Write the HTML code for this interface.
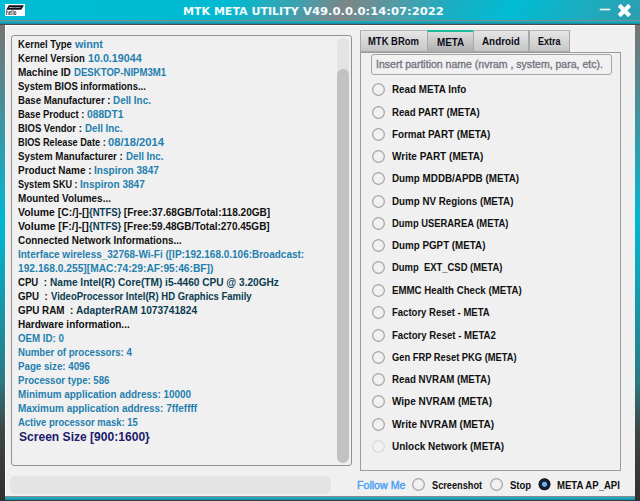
<!DOCTYPE html>
<html><head><meta charset="utf-8"><title>MTK META UTILITY</title>
<style>
html,body{margin:0;padding:0;}
body{width:640px;height:501px;overflow:hidden;position:relative;font-family:"Liberation Sans",sans-serif;
 background:linear-gradient(to bottom,#757575 30px,#00b8d4 222px,#2a7a85 380px,#3e4444 432px,#303030 501px);}
.abs{position:absolute;}
#title{left:0;top:0;width:640px;height:20px;overflow:hidden;background:#00bcd4;}
#title i{position:absolute;display:block;left:0;top:0;width:680px;height:20px;transform-origin:0 0;transform:skewX(-33deg);background:linear-gradient(to right,#00bcd4 0,#00bad2 230px,#3aa3b1 296px,#7d8587 350px,#4a9faa 406px,#1aaec2 456px,#00bcd4 517px,#1cacbf 590px,#2c9fb0 650px);}
#tl1{left:0;top:20px;width:640px;height:1px;background:#7c8c8e;}
#tl2{left:0;top:21px;width:640px;height:3px;background:linear-gradient(to bottom,#1fb3cb,#16889a);}
#tl3{left:0;top:24px;width:640px;height:1px;background:#4a4a4a;}
#panel{left:5px;top:25px;width:630px;height:471px;background:#f0f0f0;box-shadow:inset 1px 1px 0 #fff;}
#bl1{left:5px;top:496px;width:630px;height:1px;background:#8a8a8a;}
#bl2{left:5px;top:497px;width:630px;height:3px;background:linear-gradient(to bottom,#22b4cc,#178c9e);}
#bl3{left:5px;top:500px;width:630px;height:1px;background:#3a3a3a;}
.tx{top:1px;color:#f4fbfc;font-family:"DejaVu Sans","Liberation Sans",sans-serif;font-weight:bold;font-size:11px;line-height:21px;white-space:pre;transform-origin:0 50%;}
#logo{left:5px;top:4px;}
#grp{left:11px;top:35px;width:341px;height:431px;border:1px solid #929292;border-radius:3px;box-sizing:border-box;}
#track{left:337px;top:38px;width:12px;height:425px;border-radius:6px;background:#e3e3e3;}
#thumb{left:337px;top:69px;width:12px;height:394px;border-radius:6px;background:#c2c2c2;}
.ln{position:absolute;left:18px;white-space:pre;font-weight:bold;font-size:10px;line-height:14px;height:14px;color:#101010;transform-origin:0 50%;}
.b{color:#1f7fae;}
.t{color:#0b3c50;}
#scr{left:19px;top:429px;font-weight:bold;font-size:12px;line-height:16px;color:#1c1c6c;white-space:pre;transform-origin:0 50%;}
#prog{left:10px;top:476px;width:321px;height:18px;border-radius:5px;background:#e4e4e4;}
.tab{position:absolute;top:30px;height:22px;box-sizing:border-box;border:1px solid #a8a8a8;border-top-color:#b4b4b4;background:linear-gradient(to bottom,#e6e6e6,#c6c6c6);}
.tab.sel{border-top:2px solid #1abc9c;background:linear-gradient(to bottom,#dcdcdc,#b0b0b0);}
.tt{position:absolute;white-space:pre;font-weight:bold;font-size:10px;line-height:14px;height:14px;color:#0c0c18;transform-origin:0 50%;}
#pane{left:360px;top:52px;width:261px;height:419px;box-sizing:border-box;border:1px solid #9c9c9c;background:#f0f0f0;}
#inp{left:371px;top:54px;width:241px;height:21px;box-sizing:border-box;border:1px solid #a6a6a6;border-radius:3px;background:#f1f1f1;}
#ph{left:376px;top:58px;font-size:10px;line-height:14px;color:#777783;-webkit-text-stroke:0.35px #777783;white-space:pre;transform-origin:0 50%;}
.rd{position:absolute;width:14px;height:14px;background:radial-gradient(circle at 6.5px 6.5px,#f1f1f1 0,#f1f1f1 4.7px,#acacac 5.5px,#acacac 6.0px,rgba(172,172,172,0) 6.8px);}
.rd.dis{background:radial-gradient(circle at 6.5px 6.5px,#f1f1f1 0,#f1f1f1 4.7px,#dadada 5.5px,#dadada 6.0px,rgba(218,218,218,0) 6.8px);}
.rl{position:absolute;white-space:pre;font-weight:bold;font-size:10px;line-height:14px;height:14px;color:#101010;transform-origin:0 50%;}
#fm{left:357px;top:479px;font-size:10px;line-height:14px;color:#4b9ff5;-webkit-text-stroke:0.4px #4b9ff5;white-space:pre;transform-origin:0 50%;}
#rc{left:538px;top:478px;width:14px;height:14px;background:radial-gradient(circle at 6.5px 6.3px,#6db3f5 0,#6db3f5 2.1px,#151f33 3.0px,#151f33 5.7px,rgba(21,31,51,0) 6.4px);}
</style></head><body>
<div class="abs" id="title"><i></i></div><div class="abs" id="tl1"></div><div class="abs" id="tl2"></div><div class="abs" id="tl3"></div>
<div class="abs" id="panel"></div><div class="abs" id="bl1"></div><div class="abs" id="bl2"></div><div class="abs" id="bl3"></div>
<div class="abs tx" id="ttext" style="left:183px;transform:scaleX(1.0026)">MTK META UTILITY </div><div class="abs tx" id="ttext2" style="left:302.5px;transform:scaleX(1.0535)">V49.0.0.0:14:07:2022</div>
<svg class="abs" id="logo" width="20" height="12" viewBox="0 0 20 12" style="will-change:transform"><rect width="20" height="12" fill="#fff"/><polygon points="3.8,1.3 18.9,1.3 16.3,5.7 1.2,5.7" fill="#0b0f1a"/><text x="4.1" y="4.25" font-family="Liberation Sans, sans-serif" font-weight="bold" font-size="2.1" textLength="11.6" lengthAdjust="spacingAndGlyphs" fill="#fff">MEDIATEK</text><text x="1.1" y="10.6" font-family="Liberation Sans, sans-serif" font-weight="bold" font-size="6.6" textLength="10.4" lengthAdjust="spacingAndGlyphs" fill="#2a2a2a">helio</text></svg>
<svg class="abs" style="left:596px;top:0" width="40" height="20" viewBox="0 0 40 20"><rect x="3.8" y="8.7" width="10.4" height="1.6" fill="#fff"/><g fill="#fff"><rect x="20.9" y="8.4" width="15" height="4.2" rx="1.1" transform="rotate(45 28.4 10.5)"/><rect x="20.9" y="8.4" width="15" height="4.2" rx="1.1" transform="rotate(-45 28.4 10.5)"/></g></svg>
<div class="abs" id="grp"></div><div class="abs" id="track"></div><div class="abs" id="thumb"></div>
<div class="ln" id="L0a" style="left:18px;top:38px;transform:scaleX(0.9531)">Kernel Type </div><div class="ln b" id="L0b" style="left:74.5px;top:38px;transform:scaleX(1.0686)">winnt</div>
<div class="ln" id="L1a" style="left:18px;top:52px;transform:scaleX(0.9545)">Kernel Version </div><div class="ln b" id="L1b" style="left:87.5px;top:52px;transform:scaleX(1.0717)">10.0.19044</div>
<div class="ln" id="L2a" style="left:18px;top:66px;transform:scaleX(0.9986)">Machine ID </div><div class="ln b" id="L2b" style="left:73.5px;top:66px;transform:scaleX(0.9604)">DESKTOP-NIPM3M1</div>
<div class="ln" id="L3a" style="left:18px;top:80px;transform:scaleX(0.9510)">System BIOS informations...</div>
<div class="ln" id="L4a" style="left:18px;top:94px;transform:scaleX(0.9629)">Base Manufacturer : </div><div class="ln b" id="L4b" style="left:113.25px;top:94px;transform:scaleX(0.9880)">Dell Inc.</div>
<div class="ln" id="L5a" style="left:18px;top:108px;transform:scaleX(0.9406)">Base Product : </div><div class="ln b" id="L5b" style="left:87px;top:108px;transform:scaleX(1.0231)">088DT1</div>
<div class="ln" id="L6a" style="left:18px;top:122px;transform:scaleX(0.9498)">BIOS Vendor : </div><div class="ln b" id="L6b" style="left:84.5px;top:122px;transform:scaleX(0.9750)">Dell Inc.</div>
<div class="ln" id="L7a" style="left:18px;top:136px;transform:scaleX(0.9174)">BIOS Release Date : </div><div class="ln b" id="L7b" style="left:108.25px;top:136px;transform:scaleX(1.1166)">08/18/2014</div>
<div class="ln" id="L8a" style="left:18px;top:150px;transform:scaleX(0.9720)">System Manufacturer : </div><div class="ln b" id="L8b" style="left:125.5px;top:150px;transform:scaleX(0.9750)">Dell Inc.</div>
<div class="ln" id="L9a" style="left:18px;top:164px;transform:scaleX(0.9943)">Product Name : </div><div class="ln b" id="L9b" style="left:94.25px;top:164px;transform:scaleX(1.0067)">Inspiron 3847</div>
<div class="ln" id="L10a" style="left:18px;top:178px;transform:scaleX(0.9084)">System SKU : </div><div class="ln b" id="L10b" style="left:80.1px;top:178px;transform:scaleX(1.0052)">Inspiron 3847</div>
<div class="ln" id="L11a" style="left:18px;top:192px;transform:scaleX(0.9913)">Mounted Volumes...</div>
<div class="ln" id="L12a" style="left:18px;top:206px;transform:scaleX(1.0405)">Volume [C:/]-[]</div><div class="ln t" id="L12b" style="left:88.9px;top:206px;transform:scaleX(0.9529)">{NTFS}</div><div class="ln" id="L12c" style="left:121.2px;top:206px;transform:scaleX(1.0068)"> [Free:37.68GB/Total:118.20GB]</div>
<div class="ln" id="L13a" style="left:18px;top:220px;transform:scaleX(1.0577)">Volume [F:/]-[]</div><div class="ln t" id="L13b" style="left:88.9px;top:220px;transform:scaleX(0.9529)">{NTFS}</div><div class="ln" id="L13c" style="left:121.2px;top:220px;transform:scaleX(0.9996)"> [Free:59.48GB/Total:270.45GB]</div>
<div class="ln" id="L14a" style="left:18px;top:234px;transform:scaleX(0.9884)">Connected Network Informations...</div>
<div class="ln b" id="L15a" style="left:18px;top:248px;transform:scaleX(0.9980)">Interface wireless_32768-Wi-Fi ([IP:192.168.0.106:Broadcast:</div>
<div class="ln b" id="L16a" style="left:18px;top:262px;transform:scaleX(1.0220)">192.168.0.255][MAC:74:29:AF:95:46:BF])</div>
<div class="ln" id="L17a" style="left:18px;top:276px;transform:scaleX(0.9609)">CPU  : </div><div class="ln t" id="L17b" style="left:49.5px;top:276px;transform:scaleX(1.0107)">Name Intel(R) Core(TM) i5-4460 CPU @ 3.20GHz</div>
<div class="ln" id="L18a" style="left:18px;top:290px;transform:scaleX(0.9747)">GPU  : </div><div class="ln t" id="L18b" style="left:50.5px;top:290px;transform:scaleX(0.9509)">VideoProcessor Intel(R) HD Graphics Family</div>
<div class="ln" id="L19a" style="left:18px;top:304px;transform:scaleX(0.9849)">GPU RAM  : </div><div class="ln t" id="L19b" style="left:76px;top:304px;transform:scaleX(1.0180)">AdapterRAM 1073741824</div>
<div class="ln" id="L20a" style="left:18px;top:318px;transform:scaleX(1.0001)">Hardware information...</div>
<div class="ln b" id="L21a" style="left:18px;top:332px;transform:scaleX(0.9717)">OEM ID: 0</div>
<div class="ln b" id="L22a" style="left:18px;top:346px;transform:scaleX(0.9614)">Number of processors: 4</div>
<div class="ln b" id="L23a" style="left:18px;top:360px;transform:scaleX(0.9724)">Page size: 4096</div>
<div class="ln b" id="L24a" style="left:18px;top:374px;transform:scaleX(0.9615)">Processor type: 586</div>
<div class="ln b" id="L25a" style="left:18px;top:388px;transform:scaleX(0.9920)">Minimum application address: 10000</div>
<div class="ln b" id="L26a" style="left:18px;top:402px;transform:scaleX(0.9948)">Maximum application address: 7ffeffff</div>
<div class="ln b" id="L27a" style="left:18px;top:416px;transform:scaleX(0.9453)">Active processor mask: 15</div>
<div class="abs" id="scr" style="transform:scaleX(1.0054)">Screen Size [900:1600}</div>
<div class="abs" id="prog"></div>
<div class="abs" id="pane"></div>
<div class="tab" style="left:360px;width:68px"></div><div class="tt" id="T0" style="left:368px;top:35px;transform:scaleX(0.9445)">MTK BRom</div>
<div class="tab sel" style="left:427px;width:47px"></div><div class="tt" id="T1" style="left:437px;top:36px;transform:scaleX(0.9839)">META</div>
<div class="tab" style="left:473px;width:56px"></div><div class="tt" id="T2" style="left:482px;top:35px;transform:scaleX(0.9862)">Android</div>
<div class="tab" style="left:529px;width:41px"></div><div class="tt" id="T3" style="left:538px;top:35px;transform:scaleX(0.8954)">Extra</div>
<div class="abs" id="inp"></div><div class="abs" id="ph" style="transform:scaleX(1.0522)">Insert partition name (nvram , system, para, etc).</div>
<div class="rd" style="left:372px;top:83px"></div><div class="rl" id="R0" style="left:392px;top:83px;transform:scaleX(0.9813)">Read META Info</div>
<div class="rd" style="left:372px;top:106px"></div><div class="rl" id="R1" style="left:392px;top:106px;transform:scaleX(0.9658)">Read PART (META)</div>
<div class="rd" style="left:372px;top:128px"></div><div class="rl" id="R2" style="left:392px;top:128px;transform:scaleX(0.9822)">Format PART (META)</div>
<div class="rd" style="left:372px;top:150px"></div><div class="rl" id="R3" style="left:392px;top:150px;transform:scaleX(1.0032)">Write PART (META)</div>
<div class="rd" style="left:372px;top:172px"></div><div class="rl" id="R4" style="left:392px;top:172px;transform:scaleX(0.9838)">Dump MDDB/APDB (META)</div>
<div class="rd" style="left:372px;top:195px"></div><div class="rl" id="R5" style="left:392px;top:195px;transform:scaleX(0.9769)">Dump NV Regions (META)</div>
<div class="rd" style="left:372px;top:217px"></div><div class="rl" id="R6" style="left:392px;top:217px;transform:scaleX(0.9395)">Dump USERAREA (META)</div>
<div class="rd" style="left:372px;top:239px"></div><div class="rl" id="R7" style="left:392px;top:239px;transform:scaleX(0.9793)">Dump PGPT (META)</div>
<div class="rd" style="left:372px;top:261px"></div><div class="rl" id="R8" style="left:392px;top:261px;transform:scaleX(0.9432)">Dump  EXT_CSD (META)</div>
<div class="rd" style="left:372px;top:284px"></div><div class="rl" id="R9" style="left:392px;top:284px;transform:scaleX(0.9696)">EMMC Health Check (META)</div>
<div class="rd" style="left:372px;top:306px"></div><div class="rl" id="R10" style="left:392px;top:306px;transform:scaleX(0.9515)">Factory Reset - META</div>
<div class="rd" style="left:372px;top:329px"></div><div class="rl" id="R11" style="left:392px;top:329px;transform:scaleX(0.9604)">Factory Reset - META2</div>
<div class="rd" style="left:372px;top:351px"></div><div class="rl" id="R12" style="left:392px;top:351px;transform:scaleX(0.9334)">Gen FRP Reset PKG (META)</div>
<div class="rd" style="left:372px;top:373px"></div><div class="rl" id="R13" style="left:392px;top:373px;transform:scaleX(0.9749)">Read NVRAM (META)</div>
<div class="rd" style="left:372px;top:395px"></div><div class="rl" id="R14" style="left:392px;top:395px;transform:scaleX(0.9987)">Wipe NVRAM (META)</div>
<div class="rd" style="left:372px;top:418px"></div><div class="rl" id="R15" style="left:392px;top:418px;transform:scaleX(1.0084)">Write NVRAM (META)</div>
<div class="rd dis" style="left:372px;top:440px"></div><div class="rl" id="R16" style="left:392px;top:440px;transform:scaleX(0.9959)">Unlock Network (META)</div>
<div class="abs" id="fm" style="transform:scaleX(1.0619)">Follow Me</div>
<div class="rd" style="left:412px;top:478px"></div><div class="rl" id="b0" style="left:432px;top:479px;transform:scaleX(0.9207)">Screenshot</div>
<div class="rd" style="left:490px;top:478px"></div><div class="rl" id="b1" style="left:510px;top:479px;transform:scaleX(0.9519)">Stop</div>
<div class="abs" id="rc"></div><div class="rl" id="b2" style="left:557px;top:479px;transform:scaleX(0.9567)">META AP_API</div>
</body></html>
